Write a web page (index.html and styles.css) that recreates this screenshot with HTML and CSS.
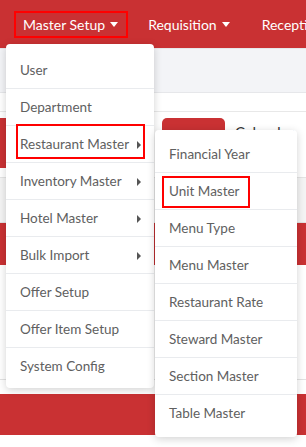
FILE: index.html
```html
<!DOCTYPE html>
<html lang="en">
<head>
    <meta charset="UTF-8">
    <meta name="viewport" content="width=device-width, initial-scale=1.0">
    <title>Master Setup</title>
    <link rel="stylesheet" href="styles.css">
</head>
<body>

<nav class="navbar">
    <ul class="nav-menu">
        <li class="nav-item marked">Master Setup <span class="caret"></span></li>
        <li class="nav-item">Requisition <span class="caret"></span></li>
        <li class="nav-item">Reception</li>
    </ul>
</nav>

<div class="subheader"></div>

<div class="content">
    <div class="card">
        <div class="card-head">
            <span class="btn-red btn-left"></span>
            <span class="btn-red btn-tab"></span>
            <span class="card-title">Calendar</span>
        </div>
        <div class="table-head"></div>
        <div class="band"></div>
        <div class="rows"></div>
    </div>
    <div class="band band-bottom"></div>
</div>

<!-- Master Setup dropdown -->
<ul class="dropdown main-menu">
    <li class="dropdown-item">User</li>
    <li class="dropdown-item">Department</li>
    <li class="dropdown-item has-sub marked-item">Restaurant Master <span class="caret-right"></span></li>
    <li class="dropdown-item has-sub">Inventory Master <span class="caret-right"></span></li>
    <li class="dropdown-item has-sub">Hotel Master <span class="caret-right"></span></li>
    <li class="dropdown-item has-sub">Bulk Import <span class="caret-right"></span></li>
    <li class="dropdown-item">Offer Setup</li>
    <li class="dropdown-item">Offer Item Setup</li>
    <li class="dropdown-item">System Config</li>
</ul>

<!-- Restaurant Master submenu -->
<ul class="dropdown sub-menu">
    <li class="dropdown-item">Financial Year</li>
    <li class="dropdown-item marked-sub">Unit Master</li>
    <li class="dropdown-item">Menu Type</li>
    <li class="dropdown-item">Menu Master</li>
    <li class="dropdown-item">Restaurant Rate</li>
    <li class="dropdown-item">Steward Master</li>
    <li class="dropdown-item">Section Master</li>
    <li class="dropdown-item">Table Master</li>
</ul>

</body>
</html>
```

FILE: styles.css
```css
body {
    font-family: Lato, "Noto Sans", sans-serif;
    margin: 0;
    padding: 0;
    background-color: #ffffff;
    width: 306px;
    height: 447px;
    overflow: hidden;
    position: relative;
}

/* Top navbar */
.navbar {
    background-color: #c93133;
    height: 48px;
    display: flex;
    align-items: center;
    overflow: hidden;
}

.nav-menu {
    list-style: none;
    margin: 0;
    padding: 0 0 0 14px;
    display: flex;
    align-items: center;
    gap: 11px;
}

.nav-item {
    color: #ffffff;
    font-size: 14px;
    display: flex;
    align-items: center;
    gap: 5px;
    height: 27px;
    padding: 0 12px 0 9px;
    white-space: nowrap;
}

.nav-item.marked {
    border: 2px solid #ff0000;
    padding: 0 8px 0 7px;
    height: 23px;
}

.caret {
    display: inline-block;
    width: 0;
    height: 0;
    border-top: 5px solid #ffffff;
    border-left: 4.5px solid transparent;
    border-right: 4.5px solid transparent;
}

/* Page behind the menus */
.subheader {
    height: 43px;
    background-color: #f3f4f7;
    border-top: 1px solid #e6e7ea;
    border-bottom: 1px solid #e6e7ea;
}

.content {
    padding-top: 18px;
}

.card {
    border-top: 1px solid #e8e8e8;
}

.card-head {
    display: flex;
    align-items: flex-start;
    height: 66px;
    padding-top: 6px;
    border-bottom: 1px solid #e4e4e4;
    box-sizing: border-box;
}

.btn-red {
    display: block;
    background-color: #c93133;
}

.btn-left {
    width: 60px;
    height: 50px;
}

.btn-tab {
    width: 63px;
    height: 50px;
    margin-left: 102px;
    border-radius: 5px 5px 0 0;
}

.card-title {
    font-size: 15px;
    color: #333333;
    padding: 5px 0 0 10px;
}

.table-head {
    height: 44px;
    background-color: #f4f4f4;
    border-bottom: 1px solid #e2e2e2;
}

.band {
    height: 42px;
    background-color: #c93133;
}

.rows {
    height: 114px;
    border-bottom: 1px solid #e2e2e2;
}

.band-bottom {
    margin-top: 14px;
    height: 41px;
}

/* Dropdown menus */
.dropdown {
    position: absolute;
    list-style: none;
    margin: 0;
    background-color: #ffffff;
    border-radius: 4px;
    box-shadow: 0 2px 8px rgba(0, 0, 0, 0.18);
    z-index: 2;
}

.main-menu {
    left: 6px;
    top: 44px;
    width: 148px;
    padding: 8px 0 4px 0;
}

.sub-menu {
    left: 155px;
    top: 130px;
    width: 142px;
    padding: 6px 0 6px 0;
    z-index: 3;
}

.dropdown-item {
    position: relative;
    display: flex;
    align-items: center;
    height: 36px;
    padding: 0 14px;
    font-size: 13.5px;
    color: #606060;
    border-bottom: 1px solid #e9ebee;
    white-space: nowrap;
}

.dropdown-item:last-child {
    border-bottom: none;
}

.has-sub {
    justify-content: space-between;
    padding-right: 13px;
}

.caret-right {
    display: inline-block;
    width: 0;
    height: 0;
    border-left: 4px solid #555555;
    border-top: 4px solid transparent;
    border-bottom: 4px solid transparent;
    margin-top: 2px;
}

/* red annotation boxes */
.marked-item::before {
    content: "";
    position: absolute;
    left: 10px;
    right: 9px;
    top: -2px;
    bottom: 3px;
    border: 2px solid #ff0000;
}

.marked-sub::before {
    content: "";
    position: absolute;
    left: 7px;
    width: 84px;
    top: 3px;
    bottom: 1px;
    border: 2px solid #ff0000;
}
```
